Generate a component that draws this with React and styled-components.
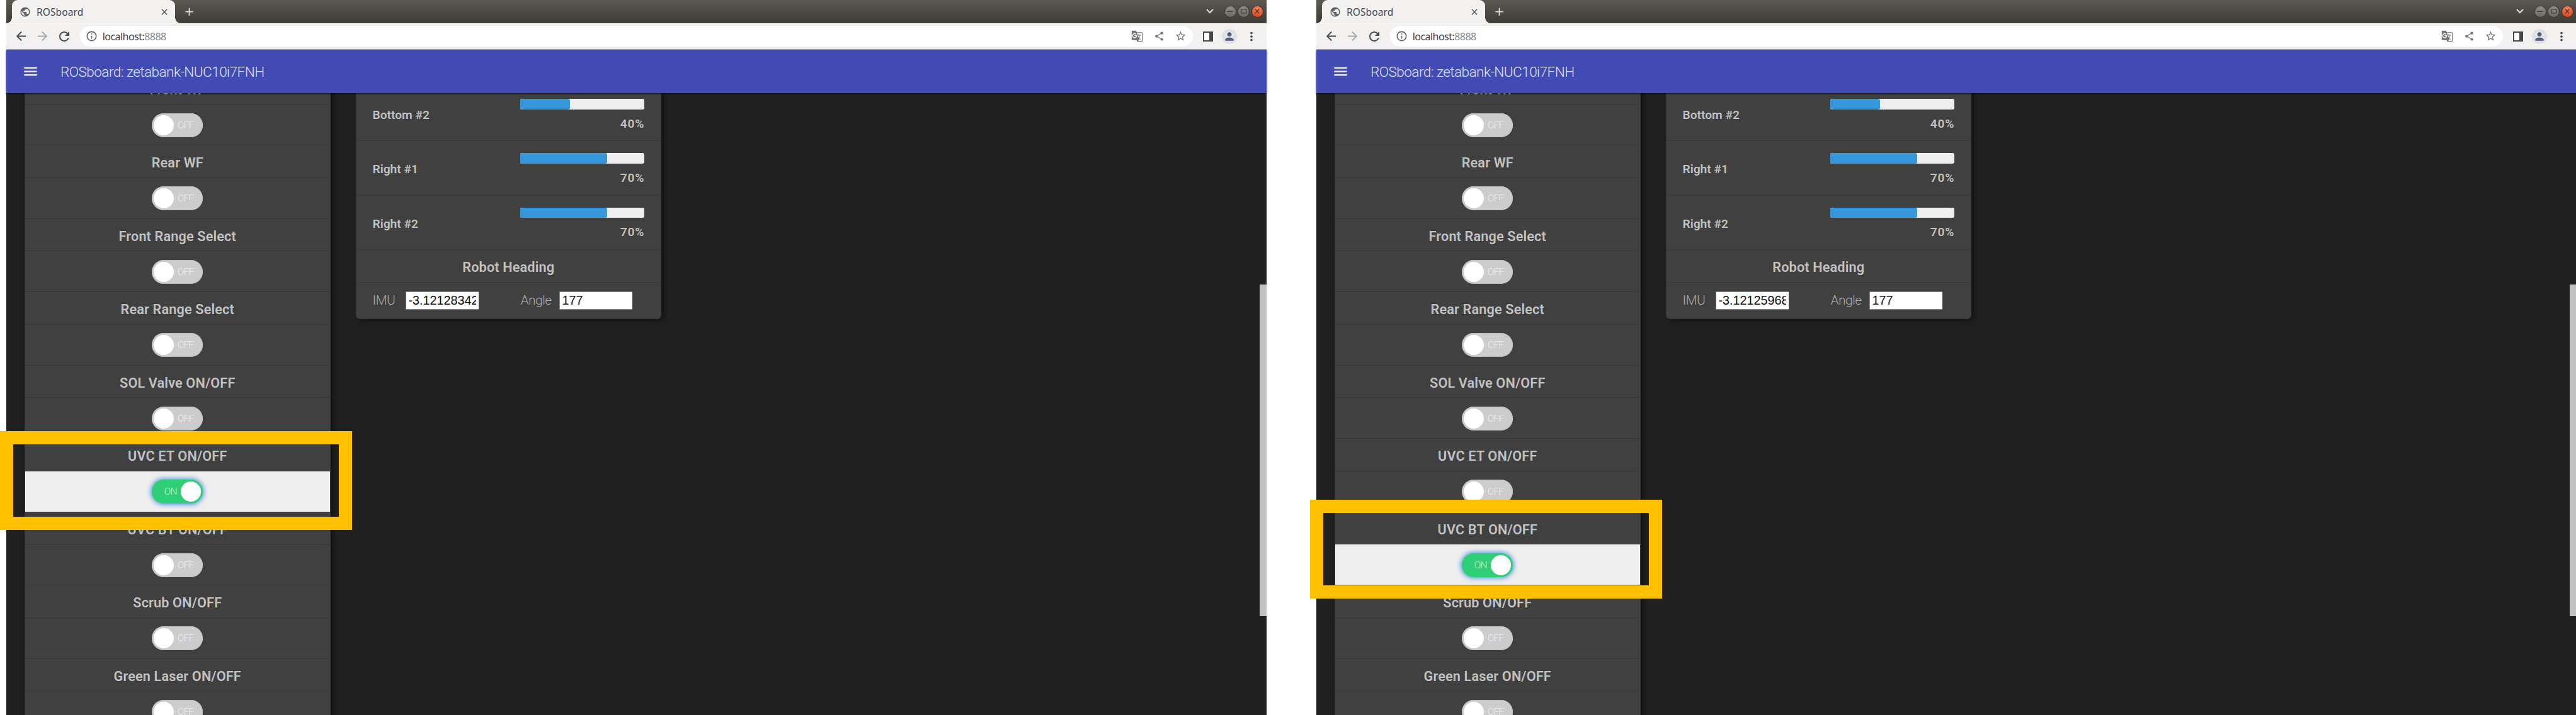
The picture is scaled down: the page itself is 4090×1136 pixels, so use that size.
import React from "react";
import styled, { createGlobalStyle } from "styled-components";
import {
  MdAdd,
  MdArrowBack,
  MdArrowForward,
  MdClose,
  MdGTranslate,
  MdInfoOutline,
  MdMenu,
  MdMoreVert,
  MdPerson,
  MdPublic,
  MdRefresh,
  MdShare,
  MdStarBorder,
} from "react-icons/md";

const GlobalStyle = createGlobalStyle`
  *, *::before, *::after { box-sizing: border-box; }
  body {
    margin: 0;
    background: #fff;
    overflow: hidden;
    font-family: Roboto, "Liberation Sans", sans-serif;
  }
`;

const Desk = styled.div`
  display: flex;
  gap: 79px;
  height: 1136px;
  padding-left: 10px;
  overflow: hidden;
`;

const Browser = styled.section`
  position: relative;
  display: flex;
  flex-direction: column;
  flex: none;
  width: 2001px;
  height: 1136px;
  background: #202020;
`;

const TabStrip = styled.div`
  display: flex;
  height: 37px;
  flex: none;
  padding: 0 4px 0 9px;
  background: linear-gradient(#5b5850, #3e3d38);
  border-bottom: 1px solid #45443f;
`;

const Tab = styled.div`
  position: relative;
  display: flex;
  align-items: center;
  width: 259px;
  height: 37px;
  padding: 0 9px 0 12px;
  background: #f2f1f0;
  border-radius: 9px 9px 0 0;
  color: #4c4d4f;

  &::before,
  &::after {
    content: "";
    position: absolute;
    bottom: 0;
    width: 9px;
    height: 9px;
  }
  &::before {
    left: -9px;
    background: radial-gradient(circle at 0 0, transparent 8.5px, #f2f1f0 9px);
  }
  &::after {
    right: -9px;
    background: radial-gradient(circle at 100% 0, transparent 8.5px, #f2f1f0 9px);
  }
`;

const TabTitle = styled.span`
  flex: 1;
  margin-left: 9px;
  font: 400 15.5px "Noto Sans", sans-serif;
  letter-spacing: 0.1px;
  color: #464646;
`;

const NewTab = styled.div`
  display: flex;
  align-items: center;
  margin-left: 12px;
  color: #deddd8;
`;

const WindowControls = styled.div`
  display: flex;
  align-items: center;
  margin-left: auto;
`;

const TabSearch = styled.div`
  display: flex;
  margin-right: 15px;
  color: #deddd8;
`;

const ControlCell = styled.div`
  display: flex;
  justify-content: center;
  width: 21.6px;
`;

const ControlButton = styled.div`
  display: grid;
  place-items: center;
  width: 17px;
  height: 17px;
  border-radius: 50%;
  color: #3b3a36;
  background: ${(p) =>
    p.$close ? "linear-gradient(#f47a57, #df4a1c)" : "linear-gradient(#8d8b84, #6b6963)"};
  box-shadow: 0 0 0 1px #3a3934;
`;

const Toolbar = styled.div`
  display: flex;
  align-items: center;
  flex: none;
  height: 42px;
  padding: 0 7px 1px 6px;
  background: #f2f1f0;
  border-top: 1px solid #fbfbfa;
  border-bottom: 1px solid #b4b3b8;
`;

const IconCell = styled.div`
  display: flex;
  align-items: center;
  justify-content: center;
  width: 34.6px;
  color: ${(p) => p.$color || "#48494b"};
`;

const AddressBar = styled.div`
  display: flex;
  align-items: center;
  flex: 1;
  height: 33px;
  margin: 0 6px 0 7px;
  padding: 0 2px 0 9px;
  border-radius: 17px;
  background: #fff;
`;

const Url = styled.span`
  flex: 1;
  margin-left: 8px;
  font: 400 16px "Noto Sans", sans-serif;
  letter-spacing: -0.55px;
  color: #3c3c3e;

  span {
    color: #85868a;
  }
`;

const Avatar = styled.div`
  display: grid;
  place-items: center;
  width: 24px;
  height: 24px;
  border-radius: 50%;
  background: #dee1e6;
  color: #525c70;
`;

const AppBar = styled.header`
  position: relative;
  z-index: 1;
  display: flex;
  align-items: center;
  flex: none;
  height: 69px;
  padding-left: 25px;
  background: #424bb3;
  box-shadow: 0 1px 3px rgba(0, 0, 0, 0.6);
  color: #f4f5fb;
`;

const AppTitle = styled.h1`
  margin: 0 0 0 34px;
  font-size: 22.5px;
  font-weight: 300;
  letter-spacing: -0.52px;
  color: #e0e2f6;
`;

const Content = styled.main`
  display: flex;
  align-items: flex-start;
  flex: 1;
  gap: 40px;
  min-height: 0;
  padding-left: 29px;
  overflow: hidden;
`;

const Card = styled.div`
  flex: none;
  width: 485.5px;
  margin-top: ${(p) => p.$scrolled}px;
  background: #404040;
  border: 1px solid #383838;
  border-radius: 6px;
  box-shadow: 4px 3px 8px rgba(0, 0, 0, 0.45);
  color: #c2c2c2;
`;

const Heading = styled.div`
  display: flex;
  align-items: center;
  justify-content: center;
  height: ${(p) => p.$height || 51.75}px;
  padding-top: 5px;
  border-bottom: 1px solid #383838;
  font-size: 21.6px;
  font-weight: 600;
  letter-spacing: 0.18px;
`;

const SwitchRow = styled.div`
  display: flex;
  align-items: center;
  justify-content: center;
  height: 64.75px;
  padding: 1px 1px 0 0;
  background: ${(p) => (p.$on ? "#eee" : "transparent")};
  border-bottom: 1px solid #383838;
  box-shadow: ${(p) => (p.$on ? "inset 0 0 0 1px #fff" : "none")};
`;

const Track = styled.div`
  display: flex;
  align-items: center;
  flex-direction: ${(p) => (p.$on ? "row-reverse" : "row")};
  gap: 6px;
  width: 81px;
  height: 38px;
  padding: 0 3px;
  border-radius: 19px;
  background: ${(p) => (p.$on ? "#2fcf78" : "#ccc")};
  box-shadow: ${(p) => (p.$on ? "0 0 7px 2px #5a9fdc" : "inset 0 0 0 1px #bdbdbd")};
  color: ${(p) => (p.$on ? "#c4f2d8" : "#f0f0f0")};
  font-size: 15.5px;
  font-weight: 300;
  letter-spacing: -0.8px;
`;

const Knob = styled.div`
  width: 32px;
  height: 32px;
  border-radius: 50%;
  background: #fff;
`;

const LevelRow = styled.div`
  display: flex;
  justify-content: space-between;
  height: 86.3px;
  padding: 19px 26px 0;
  border-bottom: 1px solid #383838;
  font-size: 19.2px;
  font-weight: 600;
`;

const LevelName = styled.div`
  padding-top: 14px;
`;

const Level = styled.div`
  width: 197px;
`;

const Percent = styled.div`
  text-align: right;
  letter-spacing: 0.7px;
`;

const Meter = styled.div`
  height: 16.5px;
  margin-bottom: 11px;
  border-radius: 3px;
  background: #eee;
  overflow: hidden;
`;

const MeterFill = styled.div`
  width: ${(p) => p.$value}%;
  height: 100%;
  border-radius: 3px;
  background: #3697db;
`;

const FieldRow = styled.div`
  display: flex;
  align-items: flex-start;
  height: 57px;
  padding: 14px 0 0 26px;
`;

const Field = styled.label`
  display: flex;
  align-items: center;
  flex: none;
  width: ${(p) => p.$width}px;
  color: #a9a9a9;
  font-size: 21px;
  font-weight: 300;
  letter-spacing: -0.6px;
`;

const FieldName = styled.span`
  flex: 1;
`;

const FieldInput = styled.input`
  width: 116px;
  height: 29px;
  padding: 0 4px;
  border: 1px solid #8a8a8a;
  border-width: 1px 0 1px 1px;
  background: #fff;
  color: #111;
  font: 19.8px "Liberation Sans", sans-serif;
`;

const HeadingFields = styled.div`
  display: flex;
  gap: 67px;
`;

const ScrollThumb = styled.div`
  position: absolute;
  top: 452px;
  right: 0;
  width: 11px;
  height: 527px;
  background: #c1c1c1;
`;

const Highlight = styled.div`
  position: absolute;
  z-index: 2;
  left: -10px;
  top: ${(p) => p.$top}px;
  width: 559px;
  height: 157px;
  border: 21px solid #ffc000;
`;

const SWITCHES = [
  "Front WF",
  "Rear WF",
  "Front Range Select",
  "Rear Range Select",
  "SOL Valve ON/OFF",
  "UVC ET ON/OFF",
  "UVC BT ON/OFF",
  "Scrub ON/OFF",
  "Green Laser ON/OFF",
];

const LEVELS = [
  ["Bottom #2", 40],
  ["Right #1", 70],
  ["Right #2", 70],
];

function Switch({ on }) {
  return (
    <Track $on={on}>
      <Knob />
      <span>{on ? "ON" : "OFF"}</span>
    </Track>
  );
}

function SidePanelIcon() {
  return (
    <svg width="16" height="16" viewBox="0 0 16 16">
      <path fill="#48494b" fillRule="evenodd" d="M0 0h16v16H0zM2 2v12h8V2z" />
      <path fill="#fff" d="M2 2h8v12H2z" />
    </svg>
  );
}

function BrowserWindow({ active, imu, frameTop }) {
  return (
    <Browser>
      <TabStrip>
        <Tab>
          <MdPublic size={18} color="#5f6368" />
          <TabTitle>ROSboard</TabTitle>
          <MdClose size={16} />
        </Tab>
        <NewTab>
          <MdAdd size={21} />
        </NewTab>
        <WindowControls>
          <TabSearch>
            <svg width="12" height="8" viewBox="0 0 12 8" fill="none" stroke="currentColor">
              <path strokeWidth="2" d="M1 1l5 5 5-5" />
            </svg>
          </TabSearch>
          <ControlCell>
            <ControlButton>
              <svg width="10" height="10" viewBox="0 0 10 10" stroke="currentColor">
                <path d="M.5 5.5h9" />
              </svg>
            </ControlButton>
          </ControlCell>
          <ControlCell>
            <ControlButton>
              <svg width="10" height="8" viewBox="0 0 10 8" fill="none" stroke="currentColor">
                <path strokeWidth="1.2" d="M1 1h8v6H1z" />
              </svg>
            </ControlButton>
          </ControlCell>
          <ControlCell>
            <ControlButton $close>
              <svg width="8" height="8" viewBox="0 0 8 8" stroke="currentColor">
                <path strokeWidth="1.3" d="M1 1l6 6M7 1L1 7" />
              </svg>
            </ControlButton>
          </ControlCell>
        </WindowControls>
      </TabStrip>

      <Toolbar>
        <IconCell><MdArrowBack size={23} /></IconCell>
        <IconCell $color="#a9a9a9"><MdArrowForward size={23} /></IconCell>
        <IconCell><MdRefresh size={24} /></IconCell>
        <AddressBar>
          <MdInfoOutline size={19} color="#5f6368" />
          <Url>localhost:<span>8888</span></Url>
          <IconCell $color="#707275"><MdGTranslate size={19} /></IconCell>
          <IconCell $color="#707275"><MdShare size={17} /></IconCell>
          <IconCell $color="#707275"><MdStarBorder size={19} /></IconCell>
        </AddressBar>
        <IconCell><SidePanelIcon /></IconCell>
        <IconCell>
          <Avatar><MdPerson size={20} /></Avatar>
        </IconCell>
        <IconCell><MdMoreVert size={22} /></IconCell>
      </Toolbar>

      <AppBar>
        <MdMenu size={27} />
        <AppTitle>ROSboard: zetabank-NUC10i7FNH</AppTitle>
      </AppBar>

      <Content>
        <Card $scrolled={-34.5}>
          {SWITCHES.map((name) => (
            <React.Fragment key={name}>
              <Heading>{name}</Heading>
              <SwitchRow $on={name === active}>
                <Switch on={name === active} />
              </SwitchRow>
            </React.Fragment>
          ))}
        </Card>
        <Card $scrolled={-11}>
          {LEVELS.map(([name, value]) => (
            <LevelRow key={name}>
              <LevelName>{name}</LevelName>
              <Level>
                <Meter>
                  <MeterFill $value={value} />
                </Meter>
                <Percent>{value}%</Percent>
              </Level>
            </LevelRow>
          ))}
          <Heading $height={52}>Robot Heading</Heading>
          <FieldRow>
            <HeadingFields>
              <Field $width={168}>
                <FieldName>IMU</FieldName>
                <FieldInput readOnly value={imu} />
              </Field>
              <Field $width={177}>
                <FieldName>Angle</FieldName>
                <FieldInput readOnly value="177" />
              </Field>
            </HeadingFields>
          </FieldRow>
        </Card>
      </Content>
      <ScrollThumb />
      <Highlight $top={frameTop} />
    </Browser>
  );
}

export default function App() {
  return (
    <>
      <GlobalStyle />
      <Desk>
        <BrowserWindow active="UVC ET ON/OFF" imu="-3.121283426" frameTop={685} />
        <BrowserWindow active="UVC BT ON/OFF" imu="-3.121259689" frameTop={794} />
      </Desk>
    </>
  );
}
